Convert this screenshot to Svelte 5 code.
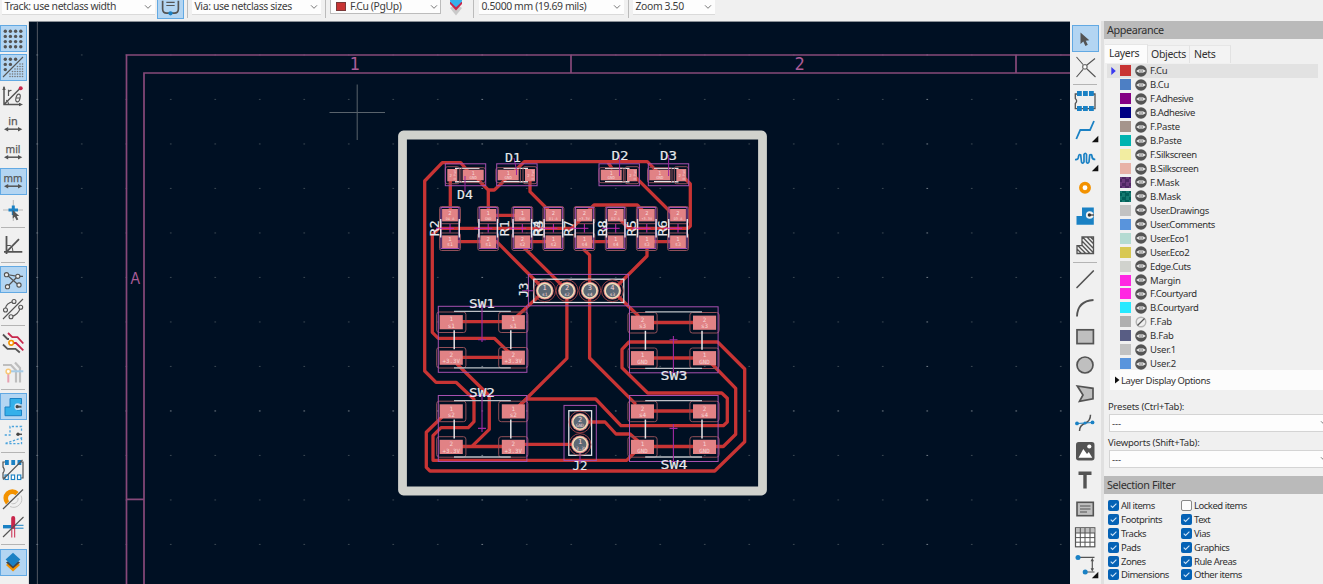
<script>
  const leftTools = [
    { icon: 'grid', on: true }, { icon: 'gridOverride', on: true }, { icon: 'polar' },
    { icon: 'unit', label: 'in' }, { icon: 'unit', label: 'mil' }, { icon: 'unit', label: 'mm', on: true },
    { icon: 'cursor' }, { sep: true }, { icon: 'angle' }, { sep: true },
    { icon: 'ratsnest', on: true }, { icon: 'ratsCurved' }, { sep: true },
    { icon: 'inactive' }, { icon: 'netcolor' }, { sep: true },
    { icon: 'zoneFill', on: true }, { icon: 'zoneOutline' }, { sep: true },
    { icon: 'padSketch' }, { icon: 'viaSketch' }, { icon: 'trackSketch' }, { sep: true },
    { icon: 'layers', on: true }
  ];
  const rightTools = [
    { icon: 'select', on: true }, { icon: 'localRats' }, { sep: true },
    { icon: 'footprint' }, { icon: 'route', more: true }, { icon: 'tune', more: true }, { icon: 'via' },
    { icon: 'zone' }, { icon: 'ruleArea' }, { sep: true },
    { icon: 'line' }, { icon: 'arc' }, { icon: 'rect' }, { icon: 'circle' }, { icon: 'poly' },
    { icon: 'bezier' }, { icon: 'image' }, { icon: 'text' }, { icon: 'textbox' }, { icon: 'table' },
    { icon: 'dimension', more: true }
  ];
  const layers = [
    ['F.Cu', '#c83434'], ['B.Cu', '#4d7fc4'], ['F.Adhesive', '#840084'], ['B.Adhesive', '#000084'],
    ['F.Paste', '#a5948c'], ['B.Paste', '#00b3b0'], ['F.Silkscreen', '#f2eda1'], ['B.Silkscreen', '#e8b2a7'],
    ['F.Mask', '#6b3a7c', '#4d2762'], ['B.Mask', '#147a70', '#02605a'], ['User.Drawings', '#c2c2c2'],
    ['User.Comments', '#5994dc'], ['User.Eco1', '#b4dbd2'], ['User.Eco2', '#d8c852'], ['Edge.Cuts', '#d0d2cd'],
    ['Margin', '#ff26e2'], ['F.Courtyard', '#ff26e2'], ['B.Courtyard', '#26e9ff'], ['F.Fab', '#afafaf'],
    ['B.Fab', '#585d84'], ['User.1', '#c2c2c2'], ['User.2', '#5994dc']
  ];
  const filters = ['All items', 'Locked items', 'Footprints', 'Text', 'Tracks', 'Vias', 'Pads', 'Graphics', 'Zones', 'Rule Areas', 'Dimensions', 'Other items'];

  const gridX = Array.from({ length: 24 }, (_, i) => 37.2 + i * 44.5);
  const gridY = Array.from({ length: 12 }, (_, i) => 54.9 + i * 44.5);

  const tracks = [
    'M467 170L460.7 162.7H442.3L424.7 181V371L436 382.3H456L474 399.3V421.7L468.3 427.7H441L433 435.7V460.3H626.7L640 447',
    'M583 217L571.7 228.3H439L432.3 235V332.3L438.3 338.3H494.3L510 353.3',
    'M450.3 175V213', 'M478.3 180L488.3 190V213M488.3 190H494.3L505 180',
    'M514 172L524.3 161.7H647.3L658.3 172.7M607.5 161.7L611.7 168',
    'M530 175V191.7L553.3 215', 'M488 215.3H522M450 241.7H488M522 241.7H553M584 241.7H616M646 241.7H678',
    'M488 241.7H496.7L544.7 290', 'M522.3 246L566.7 290', 'M584.3 242V250L589.6 255V358L635 403.3',
    'M647 242V256L612.5 290.7L638 315.5', 'M585 214L594 205H637.3L646 214', 'M635 176.7L672 213.5',
    'M684 177.5L690.3 184V226L688 228.3H628.5L616 215',
    'M451 321.7H513M451 357.3H513M451 446.5H513', 'M514 319L544.7 290.7', 'M457 364L489.3 395.7V429.3L472.7 445.7',
    'M566.9 290.7V358.3L518 407',
    'M520 405L526.7 399H595.7L621 425.7H723.3L727.3 422V398.3L721.7 393H647.7L622 367.7V349.3L629 342H717.7L744.7 369V441.7L714.7 471H430L426.3 467.3V432.3L442 417',
    'M711 363L735.7 388.3V434.3L723.3 446.5H643', 'M643 322.5H705M643 358H705M643 411H705',
    'M520 444.4H580', 'M580 422H605L616 434H630L638 441'
  ];
  const resistors = [450, 488.2, 522.3, 553.4, 584.4, 615.7, 646.8, 678].map((x, i) => ({
    x, top: [2, 1, 1, 2, 2, 2, 2, 2][i], bottom: [1, 2, 2, 1, 1, 1, 1, 1][i],
    upper: ['D4-A', 'GND', 'GND', 'D1-A', '+3.3V', 'D2-A', '+3.3V', 'D3-A'][i],
    lower: ['s1', 's1', 's2', 's2', 's4', 's4', 's3', 's3'][i]
  }));
  const refsR = [['R2', 433.9], ['R1', 504.5], ['R4', 537.4], ['R3', 538.4], ['R7', 567.8], ['R8', 602.3], ['R5', 630.8], ['R6', 661.8]];
  const diodes = [
    { x: 445.3, big: 462.7, small: 447.3, silk: 455 }, { x: 496.7, big: 497.7, small: 525, silk: 503.5 },
    { x: 599, big: 600.7, small: 627, silk: 605 }, { x: 648.3, big: 649.3, small: 676.3, silk: 654 }
  ];
  const switches = [
    { x: 438.3, y: 306.3, a: ['1', 's1'], b: ['2', '+3.3V'] }, { x: 438.3, y: 395.5, a: ['1', 's2'], b: ['2', '+3.3V'] },
    { x: 629.5, y: 306.8, a: ['2', 's3'], b: ['1', 'GND'] }, { x: 629.5, y: 395.5, a: ['2', 's4'], b: ['1', 'GND'] }
  ];
  const holes = [
    [544.7, 290.7, '1', 's1'], [567, 290.7, '2', 's2'], [589.8, 290.7, '3', 's4'], [612.4, 290.7, '4', 's3'],
    [580, 422, '2', 'GND'], [580, 444.5, '1', '+3.3V']
  ];
  const refs = [['D1', 513, 161.8, 16], ['D4', 465, 199.4, 16], ['D2', 620, 159.7, 17], ['D3', 668.5, 159.7, 17],
    ['SW1', 482, 308.3, 26], ['SW2', 482, 397.4, 26], ['SW3', 674, 380, 27], ['SW4', 674, 468.8, 27], ['J2', 580, 469.8, 15]];
</script>

{#snippet glyph(t)}
  <svg class="glyph" viewBox="0 0 26 26" fill="none" stroke="#545454" stroke-width="1.5">
    {#if t.icon === 'grid'}
      {#each [5.3, 10.4, 15.6, 20.8] as x}{#each [5.3, 10.4, 15.6, 20.8] as y}<circle cx={x} cy={y} r="1.7" fill="#545454" stroke="none" />{/each}{/each}
    {:else if t.icon === 'gridOverride'}
      {#each [[5.3, 5.3], [10.4, 5.3], [15.6, 5.3], [5.3, 10.4], [10.4, 10.4], [5.3, 15.6]] as [x, y]}<circle cx={x} cy={y} r="1.7" fill="#545454" stroke="none" />{/each}
      {#each [10, 12.5, 15, 17.5, 20, 22.5] as x}{#each [10, 12.5, 15, 17.5, 20, 22.5] as y}{#if x + y > 29}<circle cx={x} cy={y} r=".8" fill="#777" stroke="none" />{/if}{/each}{/each}
      <path d="M3 23L23 3" stroke-width="1.1" />
    {:else if t.icon === 'polar'}
      <path d="M4 4V21.5H21M4 21.5L20 5.5" /><path d="M2.3 7L4 2.8L5.7 7ZM19 19.8L23 21.5L19 23.2Z" fill="#545454" stroke="none" />
      <path d="M8.5 13V6.8M8.5 9Q9.5 7.2 11.5 7.5" stroke-width="1.2" /><ellipse cx="18" cy="15" rx="2" ry="4" transform="rotate(15 18 15)" stroke-width="1.1" /><path d="M16 15H20M6 17Q8.5 18 8.5 21" stroke-width="1" />
      <circle cx="20.7" cy="5.2" r="2" fill="#c8264b" stroke="none" />
    {:else if t.icon === 'unit'}
      <text x="13" y="12.6" text-anchor="middle" font-size="11.5" fill="#545454" stroke="#545454" stroke-width=".25" font-family="Noto Sans, sans-serif" textLength={t.label === 'in' ? 9.5 : t.label === 'mil' ? 15 : 19} lengthAdjust="spacingAndGlyphs">{t.label}</text>
      <path d="M6 17.2H20" /><path d="M4 17.2L8.2 15V19.4ZM22.3 17.2L18 15V19.4Z" fill="#545454" stroke="none" />
    {:else if t.icon === 'cursor'}
      <path d="M3 12H23M13.3 2V23" stroke="#aaa" stroke-width=".8" /><path d="M8.5 12H18M13.3 7.5V17" stroke="#1a81c4" stroke-width="3" />
      <path d="M12.7 12V20.5L14.8 18.8L16.5 22.3L18.3 21.4L16.7 18H19.2Z" fill="#545454" stroke="none" />
    {:else if t.icon === 'angle'}
      <path d="M6.5 4V22M4 19.8H22.3" stroke-width="1.8" /><path d="M6.5 19.8L19 7.2" stroke-width="1.8" /><path d="M6.5 13.5H10.5Q13 15.5 13 19.8" stroke-width="1" />
    {:else if t.icon === 'ratsnest'}
      <path d="M6.5 7.5L19 18.5M7.5 19.5L18 9M6.5 7.5L18 9.3H23" stroke-width="1.2" />
      {#each [[6.5, 7.7], [17.8, 9.3], [7.5, 19.7], [19, 18]] as [x, y]}<circle cx={x} cy={y} r="2.1" fill="#eee" stroke-width="1.1" />{/each}
    {:else if t.icon === 'ratsCurved'}
      <path d="M3 23L23 3M5.5 13Q5.5 7 14 5.5M11 20.5Q18 19.5 20.5 11.5" stroke-width="1.1" />
      {#each [[5.5, 14], [14, 5.5], [11, 20.7], [20.7, 11.3]] as [x, y]}<circle cx={x} cy={y} r="2" fill="#eee" stroke-width="1.1" />{/each}
    {:else if t.icon === 'inactive'}
      <path d="M3 4.5L7.5 9H9M3 14.5L7.5 18.8H15.5L19.8 22.5" stroke-width="1.8" /><path d="M8 3L12.3 7.2H17.5L23.3 13.5M13 13H16L23.3 20.3" stroke="#c8264b" stroke-width="1.8" />
      <circle cx="11.2" cy="12.8" r="2.3" fill="#fff" stroke="#f39200" stroke-width="1.6" />
    {:else if t.icon === 'netcolor'}
      <path d="M3 6H11L16 11.5V23.5M15 3.5L20 9V23.5" stroke="#bebebe" stroke-width="2.2" /><path d="M11 12.3H23.3" stroke="#a6cbe6" stroke-width="2" /><path d="M8.3 14V23.5" stroke="#e7a0b0" stroke-width="2" />
      <circle cx="8.3" cy="12.5" r="2.2" fill="#fff" stroke="#f8c878" stroke-width="1.5" />
    {:else if t.icon === 'zoneFill'}
      <path d="M5 13H10V4.5H21.5V10H17V16H21.5V21.7H5Z" fill="#34b0ea" stroke="#1a81c4" stroke-width="1" /><circle cx="17.8" cy="12.7" r="3.4" fill="#c9e2f6" stroke="none" /><path d="M16 12.7H21.5" stroke-width="2" /><circle cx="17.2" cy="12.7" r="1.6" fill="#444" stroke="none" />
    {:else if t.icon === 'zoneOutline'}
      <path d="M4.7 13H10V4.5H21.5V10M21.5 16V21.7H4.7Z" stroke="#4ba3dc" stroke-width="1.3" stroke-dasharray="2.2 1.7" /><path d="M17 12.3H22" stroke-width="1.5" /><circle cx="18" cy="12.3" r="1.7" fill="#444" stroke="none" />
    {:else if t.icon === 'padSketch'}
      <path d="M5 5H3V10Q5.5 13 3 16V21H5M21 5H23V21H21" stroke-width="1.2" />
      {#each [5, 11.3, 17.5] as x}<rect {x} y="3" width="3.8" height="5" fill="#1a81c4" stroke="none" /><rect {x} y="18" width="3.3" height="4.5" fill="#fff" stroke="#1a81c4" stroke-width="1.1" />{/each}
      <path d="M3 22.5L22.5 3" stroke-width="1.1" />
    {:else if t.icon === 'viaSketch'}
      <path d="M7.6 16.8A6 6 0 1 1 17 7.6" stroke="#f39200" stroke-width="4.6" /><path d="M21 9.5A8.3 8.3 0 0 1 10 20.5M18 12A5 5 0 0 1 11.5 17.5" stroke="#c4c4c4" stroke-width="1" /><path d="M3 23L23 3.5" stroke-width="1.2" />
    {:else if t.icon === 'trackSketch'}
      <path d="M3 12.7H13" stroke="#1a81c4" stroke-width="3.4" /><path d="M14 11.3H23.5M14 14.2H23.5" stroke="#1a81c4" stroke-width="1" /><path d="M13.2 4V13" stroke="#c8264b" stroke-width="4" stroke-linecap="round" /><path d="M11.8 14V23.5M14.7 14V23.5" stroke="#c8264b" stroke-width="1" /><path d="M3 23L23.5 3" stroke-width="1.1" />
    {:else if t.icon === 'layers'}
      <path d="M6 16L13 10L20 16L13 22.5Z" fill="#f39200" stroke="none" /><path d="M6 13.5L13 9L20 13.5L13 19.5Z" fill="#444" stroke="none" /><path d="M5.6 10.5L13 3.7L20.4 10.5L13 17.5Z" fill="#1a81c4" stroke="none" />
    {:else if t.icon === 'select'}
      <path d="M8.5 6.5V18L11.3 15.6L13.4 20L15.8 18.8L13.8 14.7L17.3 14.3Z" fill="#545454" stroke="none" />
    {:else if t.icon === 'localRats'}
      <path d="M4.5 3L11 10.5M23 4.5L15 11M4.5 23L11 15.3M23.5 23L15 15" stroke-width="1.1" /><rect x="10.8" y="10.8" width="4.2" height="4.2" rx="1.2" fill="#fff" stroke-width="1.1" />
    {:else if t.icon === 'footprint'}
      <path d="M6 6H3.3V10.5Q6 13 3.3 15.5V20.7H23V6H20" stroke-width="1.3" />
      {#each [5, 11, 17] as x}<rect {x} y="3" width="4.8" height="5" fill="#1a81c4" stroke="none" /><rect {x} y="18" width="4.8" height="5" fill="#1a81c4" stroke="none" />{/each}
    {:else if t.icon === 'route'}
      <path d="M4.3 22L8.3 13H18L22 4" stroke="#1a81c4" stroke-width="1.8" />
    {:else if t.icon === 'tune'}
      <path d="M3 13.5Q6.5 14 6.5 10.5Q7 7.5 8.7 9L9.5 16Q10.8 18.5 12 16V8.5Q13.3 6 14.5 8.5V16Q15.8 18.5 17 16L17.7 9Q20 7.5 20 11Q20.5 13.5 23.3 13.5" stroke="#1a81c4" stroke-width="1.7" />
    {:else if t.icon === 'via'}
      <circle cx="13" cy="12.7" r="4.2" fill="#fff" stroke="#f39200" stroke-width="3.5" />
    {:else if t.icon === 'zone'}
      <path d="M4.5 13H10V4.5H21.8V21.7H4.5Z" fill="#1a81c4" stroke="none" /><circle cx="17.7" cy="12" r="3.8" fill="#f2f2f2" stroke="none" /><path d="M17 12H22" stroke-width="1.5" /><circle cx="17.4" cy="12" r="1.7" fill="#333" stroke="none" />
    {:else if t.icon === 'ruleArea'}
      <path d="M5 13.7H10V5H21.5V21.5H5ZM5 17L9.5 21.5M6 13.7L13.8 21.5M10 13.3L18 21.5M10 9L21.5 20.7M10.5 5L21.5 16.5M15 5L21.5 11.8M18.5 5L21.5 8" stroke-width="1.3" />
    {:else if t.icon === 'line'}
      <path d="M5 21.5L21.3 5" stroke-width="1.7" stroke-linecap="round" />
    {:else if t.icon === 'arc'}
      <path d="M5 21.5Q5.5 6 21.5 5" stroke-width="1.8" />
    {:else if t.icon === 'rect'}
      <rect x="5" y="5.8" width="16.4" height="13.8" fill="#bfbfbf" stroke-width="1.7" />
    {:else if t.icon === 'circle'}
      <circle cx="13" cy="13" r="8" fill="#bfbfbf" stroke-width="1.7" />
    {:else if t.icon === 'poly'}
      <path d="M5.3 5L21 7.3V17.8L7.5 20.3L11 14Z" fill="#bfbfbf" stroke-width="1.7" />
    {:else if t.icon === 'bezier'}
      <path d="M7.5 21Q7.5 15.5 13 13.3Q18.5 11 18.5 4.7" stroke-width="1.5" /><path d="M5 13.5L21 12.5" stroke="#1a81c4" stroke-width="1.2" />{#each [[5, 13.4], [20.5, 12.4]] as [x, y]}<circle cx={x} cy={y} r="1.9" fill="#1a81c4" stroke="none" />{/each}<circle cx="13" cy="13" r="1.5" fill="#1a81c4" stroke="none" />
    {:else if t.icon === 'image'}
      <rect x="4" y="4" width="18.5" height="18.5" rx="2.7" fill="#545454" stroke="none" /><path d="M6.5 19.7L11.3 11L15 16L16.8 14L20.3 19.7Z" fill="#fff" stroke="none" /><circle cx="17.3" cy="8.5" r="2.1" fill="#fff" stroke="none" />
    {:else if t.icon === 'text'}
      <path d="M6.5 6.3H19.5M13 5V21.5" stroke-width="3.4" />
    {:else if t.icon === 'textbox'}
      <rect x="5" y="6.3" width="16.3" height="13.4" fill="#bfbfbf" stroke-width="1.6" /><path d="M8 10H18.5M8 13H18.5M8 16H15" stroke-width="1.2" />
    {:else if t.icon === 'table'}
      <rect x="3.5" y="3.8" width="19.3" height="19" fill="#fff" stroke-width="1.2" /><rect x="4" y="4.3" width="18.5" height="4.7" fill="#bfbfbf" stroke="none" /><path d="M3.5 9H23M3.5 13.6H23M3.5 18.2H23M8.3 4V23M13 4V23M18 4V23" stroke-width="1" />
    {:else if t.icon === 'dimension'}
      <path d="M6 4.3H22.5M13.5 19H22.5M20.3 7V17" stroke-width="1.2" /><path d="M20.3 4.7L18.6 8.3H22ZM20.3 18.8L18.6 15.2H22Z" fill="#545454" stroke="none" /><circle cx="6" cy="4.5" r="2.5" fill="#1a81c4" stroke="none" /><circle cx="13.2" cy="19" r="2.5" fill="#1a81c4" stroke="none" />
    {/if}
    {#if t.more}<path d="M26.3 18.8V25.3H19.8Z" fill="#111" stroke="none" />{/if}
  </svg>
{/snippet}

{#snippet chevron()}
  <svg class="chev" viewBox="0 0 8 6" fill="none" stroke="#777" stroke-width="1"><path d="M1 1.3L4 4.3L7 1.3" /></svg>
{/snippet}

{#snippet tools(list)}
  {#each list as t}
    {#if t.sep}<div class="sep"></div>{:else}<button class="tool" class:on={t.on} aria-label={t.icon}>{@render glyph(t)}</button>{/if}
  {/each}
{/snippet}

<div class="app">
  <header class="topbar">
    <div class="select track"><span>Track: use netclass width</span>{@render chevron()}</div>
    <button class="auto" aria-label="auto width">
      <svg viewBox="0 0 27 18" fill="none"><path d="M5 0V9Q5 13.5 9.5 13.5H17.5Q22 13.5 22 9V0" stroke="#545454" stroke-width="1.8" /><path d="M9 1.9H18M9 5.2H18" stroke="#545454" stroke-width="1.2" /><circle cx="13.5" cy="13.6" r="2.3" fill="#1a81c4" /></svg>
    </button>
    <i class="vsep"></i>
    <div class="select viasize"><span>Via: use netclass sizes</span>{@render chevron()}</div>
    <i class="vsep"></i>
    <div class="select layer"><b class="chip"></b><span>F.Cu (PgUp)</span>{@render chevron()}</div>
    <svg class="pair" viewBox="0 0 16 17"><path d="M2 8L8 15.5L14 8L8 4Z" fill="#c9c9c9" /><path d="M2 4L8 10.5L14 4L14 2H2Z" fill="#c8264b" /><path d="M2 0H14V1.5L8 7.3L2 1.5Z" fill="#34b0ea" /></svg>
    <i class="vsep"></i>
    <div class="select gridsize"><span>0.5000 mm (19.69 mils)</span>{@render chevron()}</div>
    <i class="vsep"></i>
    <div class="select zoom"><span>Zoom 3.50</span>{@render chevron()}</div>
  </header>

  <div class="main">
    <nav class="toolbar left">{@render tools(leftTools)}</nav>

    <svg class="canvas" viewBox="29 22 1041 562">
      <rect x="29" y="22" width="1041" height="562" fill="#001023" />
      <path d="M37.4 22V584" stroke="#4a525c" stroke-width="1.1" />
      {#each gridX as x, i}{#each gridY as y, j}
        <rect x={x - 0.8} y={y - 0.5} width="1.7" height="1.1" fill={i % 10 === 0 || j === 8 ? '#66717d' : '#36434f'} />
      {/each}{/each}
      <g fill="none" stroke="#87497a" stroke-width="1.7">
        <path d="M1070 55H126.5V584M1070 73H144V584M571 55V73M1016 55V73M126.5 499.3H144" />
      </g>
      <g fill="#ab5c96" font-family="DejaVu Sans Mono, monospace" font-size="17" text-anchor="middle">
        <text x="354.5" y="69.5">1</text><text x="799.5" y="69.5">2</text><text x="135.2" y="283.7" font-family="Liberation Sans, sans-serif" font-size="17" textLength="9.5" lengthAdjust="spacingAndGlyphs">A</text>
      </g>
      <path d="M329.5 112.5H385M357.2 84.5V140" stroke="#59636c" stroke-width="1" />
      <rect x="402.5" y="135" width="360" height="356" rx="1" fill="none" stroke="#d0d2cd" stroke-width="8.8" stroke-linejoin="round" />

      <g fill="none" stroke="#c83434" stroke-width="3.3" stroke-linecap="round" stroke-linejoin="round">
        {#each tracks as d}<path {d} />{/each}
      </g>

      {#each resistors as r}
        <g fill="#e18285"><rect x={r.x - 7.9} y="209" width="15.8" height="12.4" /><rect x={r.x - 7.9} y="235.4" width="15.8" height="12.6" /></g>
        <g fill="none" stroke="#925059" stroke-width="1"><rect x={r.x - 10.4} y="206.5" width="20.8" height="17.2" rx="2" /><rect x={r.x - 10.4} y="233" width="20.8" height="17.5" rx="2" /></g>
        <rect x={r.x - 9} y="207.5" width="18" height="41" fill="none" stroke="#a650b0" stroke-width="1" />
        <path d="M{r.x - 9.3} 219V237.5M{r.x + 9.3} 219V237.5" stroke="#e3e5e8" stroke-width="1.4" />
        <path d="M{r.x - 14} 228.3H{r.x + 4}M{r.x} 224V232.5" stroke="#c32bb5" stroke-width="1" />
        <g class="pad"><text x={r.x} y="214.8" font-size="5.5">{r.top}</text><text x={r.x} y="219.6" font-size="3.6">{r.upper}</text><text x={r.x} y="241.3" font-size="5.5">{r.bottom}</text><text x={r.x} y="246.4" font-size="4.8">{r.lower}</text></g>
      {/each}

      {#each diodes as d}
        <path d="M{d.silk} 168.4h24.5M{d.silk} 181.7h24.5" stroke="#e3e5e8" stroke-width="1.4" />
        <g fill="#e18285"><rect x={d.big} y="169.7" width="21" height="10.6" /><rect x={d.small} y="169" width="10" height="12.3" /></g>
        <rect x={d.small - 2} y="166.7" width="14" height="17" rx="2" fill="none" stroke="#925059" stroke-width="1" />
        <rect x={d.big - 1.8} y="167.7" width="24.5" height="15" rx="2" fill="none" stroke="#925059" stroke-width="1" />
        <rect x={d.x} y="163.8" width="40.4" height="21.9" fill="none" stroke="#a650b0" stroke-width="1" />
        <g class="pad"><text x={d.big + 10.5} y="174.8" font-size="5">1</text><text x={d.big + 10.5} y="179" font-size="4">GND</text><text x={d.small + 3.5} y="176.5" font-size="4">2</text><text font-size="3.2" transform="translate({d.small + 8.5} 175) rotate(-90)">D-Pad</text></g>
      {/each}
      <path d="M465 176V192M514 158L516.5 170V175M619.6 155V176M668.6 155V176" stroke="#9a259f" stroke-width="1" fill="none" />

      {#each switches as s}
        <g fill="none" stroke="#925059" stroke-width="1">
          {#each [0, 62] as dx}{#each [5.7, 41.2] as dy}<rect x={s.x - 1.6 + dx} y={s.y + dy} width="29.2" height="20.5" rx="2.5" />{/each}{/each}
        </g>
        <g fill="#e18285">{#each [1.4, 63.5] as dx}{#each [8.8, 44.3] as dy}<rect x={s.x + dx} y={s.y + dy} width="23.1" height="14.2" />{/each}{/each}</g>
        <rect x={s.x} y={s.y} width="88.6" height="66" fill="none" stroke="#a650b0" stroke-width="1" />
        <path d="M{s.x + 15.7} {s.y + 5.1}h56.8M{s.x + 15.7} {s.y + 61.5}h56.8" stroke="#bcc1c7" stroke-width="1.3" />
        <path d="M{s.x + 15.9} {s.y + 24}v19M{s.x + 72.5} {s.y + 24}v19" stroke="#e3e5e8" stroke-width="1.5" />
        <g class="pad">
          {#each [13, 75] as dx}
            <text x={s.x + dx} y={s.y + 15} font-size="6">{s.a[0]}</text><text x={s.x + dx} y={s.y + 21.5} font-size="6">{s.a[1]}</text>
            <text x={s.x + dx} y={s.y + 50.5} font-size="6">{s.b[0]}</text><text x={s.x + dx} y={s.y + 57} font-size="5.8">{s.b[1]}</text>
          {/each}
        </g>
      {/each}
      <path d="M482 303V342M482 393V432M673.4 336V374M673.4 424V463M478 339.7H486M478 428.4H486M669.5 339.7H677.5M669.5 428.4H677.5M580 453V464M522 290.7H534" stroke="#a02ba2" stroke-width="1.1" />

      <g fill="none" stroke="#a650b0" stroke-width="1"><rect x="528.4" y="274.4" width="100" height="31.4" /><rect x="564" y="405.4" width="32.3" height="55.2" /></g>
      <g fill="none" stroke="#e3e5e8" stroke-width="1.3"><rect x="533.8" y="279.2" width="90" height="23.3" /><rect x="568.8" y="410.7" width="22.8" height="44.6" /></g>
      {#each holes as [x, y, n, net]}
        <circle cx={x} cy={y} r="10.9" fill="none" stroke="#a54449" stroke-width=".9" />
        <circle cx={x} cy={y} r="8.9" fill="#e18285" />
        <circle cx={x} cy={y} r="7.2" fill="#5d6975" stroke="#f0dfb9" stroke-width="1.5" />
        <g class="pad"><text {x} y={y - 0.5} font-size="7">{n}</text><text {x} y={y + 5} font-size="4.5">{net}</text></g>
      {/each}

      <g class="ref">
        {#each refs as [label, x, y, w]}<text {x} {y} textLength={w} lengthAdjust="spacingAndGlyphs">{label}</text>{/each}
        {#each refsR as [label, x]}<text transform="translate({x + 4.8} 228.2) rotate(-90)" textLength="16" lengthAdjust="spacingAndGlyphs">{label}</text>{/each}
        <text transform="translate(528.1 290) rotate(-90)" textLength="15" lengthAdjust="spacingAndGlyphs">J3</text>
      </g>
    </svg>

    <nav class="toolbar right">{@render tools(rightTools)}</nav>

    <aside class="panel">
      <h2>Appearance</h2>
      <div class="tabs"><span class="tab active">Layers</span><span class="tab">Objects</span><span class="tab nets">Nets</span></div>
      <ul class="layers">
        {#each layers as [name, color, dark], i}
          <li class:current={i === 0}>
            <span class="mark">{#if i === 0}<svg viewBox="0 0 5 8"><path d="M.3 0L4.8 4L.3 8Z" fill="#3a3af0" /></svg>{/if}</span>
            <span class="swatch" style:background={dark ? `repeating-conic-gradient(${dark} 0 25%, ${color} 0 50%) 2px 2px / 7px 7px` : color}></span>
            <svg class="eye" viewBox="0 0 12 12">
              {#if name === 'F.Fab'}
                <circle cx="6" cy="6" r="4.8" fill="#eee" stroke="#b5b5b5" stroke-width="1.4" /><path d="M2.5 9.5L9.5 2.5" stroke="#555" stroke-width="1.2" />
              {:else}
                <circle cx="6" cy="6" r="5.8" fill="#545454" /><path d="M1.2 6Q6 1.8 10.8 6Q6 10.2 1.2 6Z" fill="#f0f0f0" /><circle cx="6" cy="6" r="1.8" fill="#bbb" stroke="#888" stroke-width=".6" />
              {/if}
            </svg>
            <span class="name" class:long={name.length > 8}>{name}</span>
          </li>
        {/each}
      </ul>
      <div class="options"><svg viewBox="0 0 5 8"><path d="M0 .5L4.5 4L0 7.5Z" fill="#111" /></svg>Layer Display Options</div>
      <div class="field">Presets (Ctrl+Tab):</div>
      <div class="combo"><span>---</span>{@render chevron()}</div>
      <div class="field">Viewports (Shift+Tab):</div>
      <div class="combo"><span>---</span>{@render chevron()}</div>
      <h2 class="second">Selection Filter</h2>
      <div class="filters">
        {#each filters as f}
          <label><span class="box" class:off={f === 'Locked items'}>{#if f !== 'Locked items'}<svg viewBox="0 0 11 11"><path d="M2.7 5.6L4.6 7.5L8.4 3.7" fill="none" stroke="#cfe4f7" stroke-width="1.1" /></svg>{/if}</span>{f}</label>
        {/each}
      </div>
    </aside>
  </div>
</div>

<style>
  :global(body) { margin: 0; overflow: hidden; background: #f0f0f0; }
  .app { width: 1323px; height: 584px; overflow: hidden; display: flex; flex-direction: column; background: #f0f0f0; color: #303030; font-family: "Noto Sans", sans-serif; }
  svg { display: block; }
  button { padding: 0; margin: 0; font: inherit; }
  .topbar { height: 21px; flex: none; display: flex; align-items: flex-start; padding-left: 2px; box-sizing: border-box; color: #3c3c3c; }
  .select { height: 15px; box-sizing: border-box; background: #fdfdfd; border-bottom: 1px solid #dadada; display: flex; align-items: center; padding: 0 3px 1px 2.5px; font-size: 10.4px; line-height: 13px; letter-spacing: -.37px; white-space: nowrap; }
  .select .chev { margin-left: auto; }
  .chev { width: 8px; height: 6px; flex: none; }
  .track { width: 153px; }
  .auto { width: 27px; height: 19px; box-sizing: border-box; margin: 0 3px 0 2px; border: 1px solid #62a9e3; border-top: 0; background: #b3d5f2; }
  .auto svg { width: 25px; height: 18px; }
  .vsep { width: 1px; height: 18px; background: #bbb; }
  .viasize { width: 129px; margin: 0 4px 0 4px; }
  .layer { width: 111px; height: 14px; border: 1px solid #bcbcbc; border-top: 0; margin-left: 4px; padding: 0 2px 0 5px; }
  .chip { width: 10px; height: 9px; margin: 0 4px 1px 0; background: #c83434; border: 1px solid #7a3a3a; box-sizing: border-box; }
  .pair { width: 16px; height: 17px; margin: 0 9px 0 7px; }
  .gridsize { width: 145px; margin: 0 4px 0 5px; }
  .zoom { width: 82px; margin-left: 4px; }
  .main { height: 563px; display: flex; }
  .toolbar { box-sizing: border-box; display: flex; flex-direction: column; gap: 1.7px; padding-top: 4px; flex: none; }
  .left { width: 29px; border-right: 1px solid #d8d8d8; }
  .right { width: 34px; padding-left: 2px; border-right: 3px solid #e0e0e0; }
  .tool { width: 26.5px; height: 27px; flex: none; box-sizing: border-box; border: 1px solid transparent; background: transparent; display: flex; align-items: center; justify-content: center; }
  .tool.on { background: #b3d5f2; border-color: #62a9e3; }
  .glyph { width: 26px; height: 26px; flex: none; overflow: visible; }
  .sep { height: 4.3px; width: 24px; margin-left: 1px; flex: none; background: linear-gradient(#b4b4b4, #b4b4b4) 0 1.5px / 100% 1px no-repeat; }
  .right .sep { height: 3.9px; }
  .canvas { width: 1041px; height: 562px; flex: none; border-top: 1px solid #8b9198; }
  .pad { fill: #f7d6d6; font-family: "DejaVu Sans Mono", monospace; text-anchor: middle; }
  .ref { fill: #e8eaed; stroke: #e8eaed; stroke-width: .15px; font-family: "DejaVu Sans Mono", monospace; font-size: 13px; text-anchor: middle; }
  .panel { flex: 1; min-width: 0; font-size: 9.5px; letter-spacing: -.38px; display: flex; flex-direction: column; white-space: nowrap; }
  h2 { margin: 0; height: 18px; flex: none; padding-left: 3px; background: #bababa; font-size: 10.8px; line-height: 18px; font-weight: 400; }
  .tabs { display: flex; height: 19px; margin: 5px 0 0 1px; font-size: 10.5px; line-height: 17px; align-items: flex-end; letter-spacing: -.3px; }
  .tab { box-sizing: border-box; height: 18px; width: 42px; padding-left: 3px; background: #f3f3f3; border-right: 1px solid #e2e2e2; border-top: 1px solid #e6e6e6; }
  .tab.active { width: 43px; height: 19px; padding-left: 4px; background: #fcfcfc; }
  .tab.nets { width: 41px; padding-left: 4px; }
  .layers { list-style: none; margin: 0 5px 0 3px; padding: 1px 0 0; height: 307px; flex: none; box-sizing: border-box; }
  .layers li { height: 13.94px; display: flex; align-items: center; }
  .layers .current { background: #e2e2e2; }
  .mark { width: 13px; box-sizing: border-box; padding-left: 4px; }
  .mark svg { width: 5px; height: 8px; }
  .swatch { width: 11px; height: 11px; margin-right: 4px; }
  .eye { width: 12px; height: 12px; margin-right: 3px; }
  .name { letter-spacing: -.2px; }
  .name.long { letter-spacing: -.4px; }
  .options { height: 20px; flex: none; margin-left: 6px; padding-left: 5px; background: #fcfcfc; display: flex; align-items: center; gap: 1px; }
  .options svg { width: 5px; height: 8px; }
  .field { margin: 9px 0 0 4px; height: 15px; flex: none; line-height: 16px; letter-spacing: -.22px; }
  .combo { margin-left: 5px; height: 18px; width: 220px; flex: none; box-sizing: border-box; background: #fdfdfd; border: 1px solid #d4d4d4; display: flex; align-items: center; justify-content: space-between; padding-left: 2px; letter-spacing: 0; }
  .combo + .field { margin-top: 3px; }
  .second { margin-top: 8px; }
  .filters { display: grid; grid-template-columns: 73px 1fr; grid-auto-rows: 13.95px; padding: 4.3px 0 0 4px; letter-spacing: -.48px; }
  label { display: flex; align-items: center; gap: 2px; }
  .box { width: 11px; height: 11px; border-radius: 2px; background: #0562b5; box-sizing: border-box; }
  .box.off { background: #fcfcfc; border: 1px solid #888; }
</style>
